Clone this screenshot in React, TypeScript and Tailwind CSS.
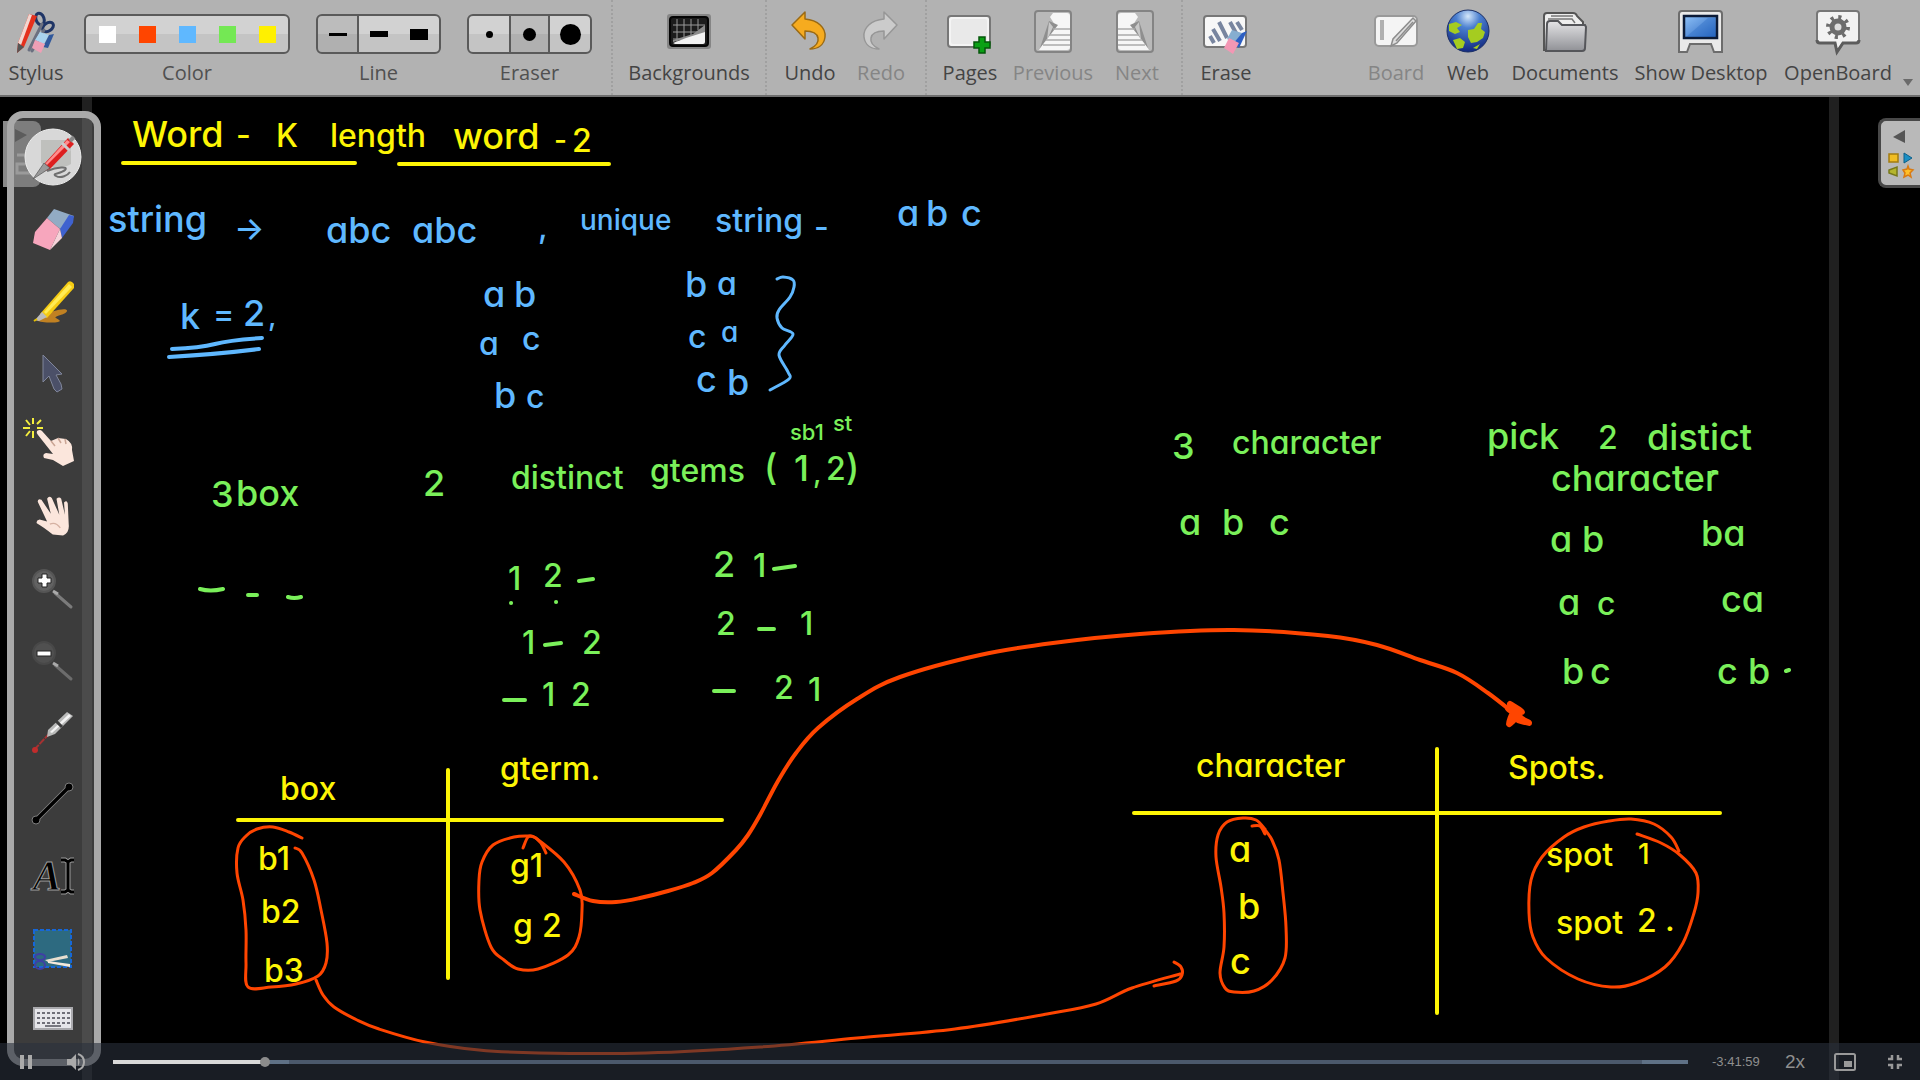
import React from "react";

type Point = [number, number];

const YELLOW = "#fdf505";
const BLUE = "#5fb8ff";
const GREEN = "#7af05a";
const RED = "#ff4500";

/** Turns a list of pen samples into a smooth curve. */
function smooth(points: Point[]): string {
  let d = `M${points[0][0]} ${points[0][1]}`;
  for (let i = 0; i < points.length - 1; i++) {
    const p0 = points[Math.max(0, i - 1)];
    const p1 = points[i];
    const p2 = points[i + 1];
    const p3 = points[Math.min(points.length - 1, i + 2)];
    const c1x = p1[0] + (p2[0] - p0[0]) / 6;
    const c1y = p1[1] + (p2[1] - p0[1]) / 6;
    const c2x = p2[0] - (p3[0] - p1[0]) / 6;
    const c2y = p2[1] - (p3[1] - p1[1]) / 6;
    d += `C${c1x} ${c1y} ${c2x} ${c2y} ${p2[0]} ${p2[1]}`;
  }
  return d;
}

/* ------------------------------------------------------------------ */
/* Board content                                                       */
/* ------------------------------------------------------------------ */

type Note = { x: number; y: number; s: 22 | 28 | 32 | 36; t: string };

const yellowNotes: Note[] = [
  { x: 132, y: 147, s: 36, t: "Word" },
  { x: 236, y: 146, s: 32, t: "-" },
  { x: 276, y: 147, s: 32, t: "K" },
  { x: 330, y: 147, s: 32, t: "length" },
  { x: 453, y: 149, s: 36, t: "word" },
  { x: 554, y: 150, s: 28, t: "-" },
  { x: 572, y: 152, s: 32, t: "2" },
  { x: 280, y: 800, s: 32, t: "box" },
  { x: 500, y: 780, s: 32, t: "gterm." },
  { x: 258, y: 870, s: 32, t: "b1" },
  { x: 261, y: 923, s: 32, t: "b2" },
  { x: 264, y: 982, s: 32, t: "b3" },
  { x: 510, y: 877, s: 32, t: "g1" },
  { x: 513, y: 937, s: 32, t: "g" },
  { x: 542, y: 937, s: 32, t: "2" },
  { x: 1196, y: 777, s: 32, t: "character" },
  { x: 1508, y: 779, s: 32, t: "Spots." },
  { x: 1229, y: 862, s: 36, t: "a" },
  { x: 1238, y: 919, s: 36, t: "b" },
  { x: 1230, y: 974, s: 36, t: "c" },
  { x: 1546, y: 866, s: 32, t: "spot" },
  { x: 1638, y: 864, s: 28, t: "1" },
  { x: 1556, y: 934, s: 32, t: "spot" },
  { x: 1637, y: 932, s: 32, t: "2" },
  { x: 1665, y: 931, s: 32, t: "." },
];

const blueNotes: Note[] = [
  { x: 108, y: 232, s: 36, t: "string" },
  { x: 234, y: 240, s: 32, t: "→" },
  { x: 326, y: 243, s: 36, t: "abc" },
  { x: 412, y: 243, s: 36, t: "abc" },
  { x: 538, y: 238, s: 32, t: "," },
  { x: 580, y: 230, s: 28, t: "unique" },
  { x: 715, y: 232, s: 32, t: "string" },
  { x: 814, y: 238, s: 32, t: "-" },
  { x: 897, y: 226, s: 36, t: "a" },
  { x: 926, y: 226, s: 36, t: "b" },
  { x: 961, y: 226, s: 36, t: "c" },
  { x: 180, y: 329, s: 36, t: "k" },
  { x: 213, y: 325, s: 32, t: "=" },
  { x: 243, y: 326, s: 36, t: "2" },
  { x: 268, y: 326, s: 28, t: "," },
  { x: 483, y: 307, s: 36, t: "a" },
  { x: 514, y: 307, s: 36, t: "b" },
  { x: 479, y: 355, s: 32, t: "a" },
  { x: 522, y: 350, s: 32, t: "c" },
  { x: 494, y: 408, s: 36, t: "b" },
  { x: 526, y: 408, s: 32, t: "c" },
  { x: 685, y: 297, s: 36, t: "b" },
  { x: 717, y: 295, s: 32, t: "a" },
  { x: 688, y: 348, s: 32, t: "c" },
  { x: 721, y: 342, s: 28, t: "a" },
  { x: 696, y: 392, s: 36, t: "c" },
  { x: 727, y: 395, s: 36, t: "b" },
];

const greenNotes: Note[] = [
  { x: 211, y: 507, s: 36, t: "3" },
  { x: 236, y: 506, s: 36, t: "box" },
  { x: 423, y: 496, s: 36, t: "2" },
  { x: 511, y: 489, s: 32, t: "distinct" },
  { x: 650, y: 482, s: 32, t: "gtems" },
  { x: 764, y: 480, s: 36, t: "(" },
  { x: 794, y: 481, s: 36, t: "1" },
  { x: 813, y: 483, s: 28, t: "," },
  { x: 826, y: 480, s: 32, t: "2" },
  { x: 846, y: 480, s: 36, t: ")" },
  { x: 790, y: 440, s: 22, t: "sb1" },
  { x: 833, y: 431, s: 22, t: "st" },
  { x: 508, y: 590, s: 32, t: "1" },
  { x: 543, y: 587, s: 32, t: "2" },
  { x: 713, y: 577, s: 36, t: "2" },
  { x: 753, y: 577, s: 32, t: "1" },
  { x: 522, y: 654, s: 32, t: "1" },
  { x: 582, y: 654, s: 32, t: "2" },
  { x: 716, y: 635, s: 32, t: "2" },
  { x: 800, y: 635, s: 32, t: "1" },
  { x: 542, y: 706, s: 32, t: "1" },
  { x: 571, y: 706, s: 32, t: "2" },
  { x: 774, y: 699, s: 32, t: "2" },
  { x: 808, y: 701, s: 32, t: "1" },
  { x: 1172, y: 459, s: 36, t: "3" },
  { x: 1232, y: 454, s: 32, t: "character" },
  { x: 1179, y: 535, s: 36, t: "a" },
  { x: 1222, y: 535, s: 36, t: "b" },
  { x: 1269, y: 535, s: 36, t: "c" },
  { x: 1487, y: 449, s: 36, t: "pick" },
  { x: 1598, y: 449, s: 32, t: "2" },
  { x: 1647, y: 450, s: 36, t: "distict" },
  { x: 1551, y: 491, s: 36, t: "character" },
  { x: 1550, y: 552, s: 36, t: "a" },
  { x: 1582, y: 552, s: 36, t: "b" },
  { x: 1701, y: 546, s: 36, t: "ba" },
  { x: 1558, y: 615, s: 36, t: "a" },
  { x: 1597, y: 615, s: 32, t: "c" },
  { x: 1721, y: 612, s: 36, t: "ca" },
  { x: 1562, y: 684, s: 36, t: "b" },
  { x: 1590, y: 684, s: 36, t: "c" },
  { x: 1717, y: 684, s: 36, t: "c" },
  { x: 1748, y: 684, s: 36, t: "b" },
];

const noteSize = { 22: "text-[22px]", 28: "text-[28px]", 32: "text-[32px]", 36: "text-[36px]" };

function Notes({ notes, color }: { notes: Note[]; color: string }) {
  return (
    <g fill={color}>
      {notes.map((n, i) => (
        <text key={i} x={n.x} y={n.y} className={noteSize[n.s]}>
          {n.t}
        </text>
      ))}
    </g>
  );
}

const brace: Point[] = [[777, 279], [783, 277], [793, 280], [794, 287], [790, 297], [779, 310], [777, 318], [782, 328], [793, 334], [785, 345], [779, 355], [788, 372], [789, 379], [770, 390]];

const redStrokes: Point[][] = [
  [[302, 838], [289, 832], [273, 827], [257, 829], [246, 836], [238, 848], [237, 873], [243, 900], [246, 930], [246, 963], [248, 987], [271, 987], [296, 984], [318, 976], [326, 963], [327, 943], [321, 910], [314, 880], [302, 853], [295, 848]],
  [[523, 848], [528, 837], [534, 837], [541, 843], [546, 853]],
  [[536, 838], [530, 836], [514, 837], [493, 845], [482, 862], [479, 880], [480, 910], [491, 947], [504, 960], [518, 969], [538, 969], [568, 955], [579, 937], [582, 910], [580, 890], [564, 862], [536, 838]],
  [[574, 894], [593, 901], [616, 902], [640, 898], [668, 891], [693, 883], [712, 873], [736, 850], [748, 835], [760, 815], [778, 781], [796, 753], [818, 728], [857, 699], [900, 677], [980, 655], [1053, 643], [1140, 634], [1234, 630], [1328, 636], [1377, 645], [1420, 660], [1457, 673], [1488, 693], [1516, 715]],
  [[1510, 704], [1522, 712], [1508, 708], [1516, 716], [1509, 724], [1514, 712], [1522, 719], [1529, 723], [1518, 720]],
  [[316, 980], [323, 995], [334, 1007], [357, 1020], [379, 1029], [425, 1042], [479, 1050], [539, 1053], [646, 1053], [760, 1047], [857, 1038], [955, 1029], [1047, 1014], [1096, 1004], [1132, 988], [1180, 974]],
  [[1174, 962], [1181, 967], [1182, 975], [1176, 981], [1154, 986]],
  [[1252, 826], [1260, 826], [1265, 834]],
  [[1265, 829], [1256, 820], [1243, 818], [1227, 822], [1218, 835], [1216, 857], [1221, 887], [1224, 913], [1224, 947], [1220, 973], [1225, 988], [1234, 992], [1254, 991], [1272, 980], [1285, 958], [1286, 927], [1283, 893], [1279, 860], [1272, 840], [1263, 827]],
  [[1679, 851], [1671, 837], [1654, 824], [1631, 819], [1609, 821], [1584, 827], [1564, 837], [1542, 857], [1531, 880], [1529, 913], [1533, 937], [1546, 958], [1578, 979], [1611, 987], [1636, 983], [1665, 967], [1683, 943], [1694, 913], [1698, 893], [1696, 873], [1680, 855], [1661, 843], [1637, 834]],
];

function Ink() {
  return (
    <svg
      viewBox="0 97 1920 983"
      preserveAspectRatio="xMinYMin meet"
      role="img"
      aria-label="Whiteboard notes"
      className="absolute inset-0 h-full w-full font-['Inter','Noto_Sans',sans-serif] font-medium [font-feature-settings:'cv11']"
    >
      <Notes notes={yellowNotes} color={YELLOW} />
      <Notes notes={blueNotes} color={BLUE} />
      <Notes notes={greenNotes} color={GREEN} />
      <g fill="none" strokeLinecap="round" strokeLinejoin="round" strokeWidth="4">
        <g stroke={YELLOW}>
          <path d="M123 163H355M399 164H609" />
          <path d="M238 820H722M448 770V978" />
          <path d="M1134 813H1720M1437 749V1013" />
        </g>
        <g stroke={BLUE}>
          <path d="M172 349Q200 348 215 344T262 338M169 357Q220 354 259 349" />
          <path d={smooth(brace)} strokeWidth="3" />
        </g>
        <g stroke={GREEN}>
          <path d="M200 589q10 3 23 0M248 595h9M288 597q6 2 13 0" />
          <path d="M579 581l14-2M774 569l21-3M545 645l16-2M759 629h15M504 700h21M714 691h20" />
          <path d="M511 603h.1M556 602h.1M1786 671l3-1M1713 472h3" />
        </g>
        <g stroke={RED}>
          {redStrokes.map((s, i) => (
            <path key={i} d={smooth(s)} strokeWidth={i === 4 ? 6 : i === 3 ? 4 : 3} />
          ))}
        </g>
      </g>
    </svg>
  );
}

/* ------------------------------------------------------------------ */
/* Toolbar icons (44 x 44)                                             */
/* ------------------------------------------------------------------ */

function Icon({ children }: { children: React.ReactNode }) {
  return (
    <svg viewBox="0 0 44 44" className="h-11 w-11 flex-none overflow-visible" aria-hidden="true">
      {children}
    </svg>
  );
}

const StylusIcon = () => (
  <Icon>
    <g fill="none" stroke="#1f3566" strokeWidth="3">
      <ellipse cx="26" cy="9" rx="4" ry="6" transform="rotate(-20 26 9)" />
      <ellipse cx="34" cy="17" rx="6" ry="4" transform="rotate(-35 34 17)" />
    </g>
    <path d="M28 14L15 40M30 20L18 41" stroke="#6b7080" strokeWidth="3" strokeLinecap="round" />
    <path d="M15 4l8 2L10 37l-7 6 1-10z" fill="#e5301c" />
    <path d="M15 4l3 1L7 35l-3-2z" fill="#f3d6d0" />
    <path d="M4 33l6 4-7 6z" fill="#555" />
    <path d="M26 22l9 3-5 9-9-4z" fill="#a9d3ee" />
    <path d="M35 25l5-1-6 14-5-1z" fill="#30589c" />
    <path d="M21 30l10 4-4 9-9-5z" fill="#ef9fb6" />
  </Icon>
);

const BackgroundsIcon = () => (
  <Icon>
    <rect x="0" y="4" width="44" height="35" rx="3" fill="#858585" />
    <rect x="3" y="7" width="38" height="29" rx="3" fill="#1c1c1c" stroke="#050505" strokeWidth="2" />
    <path d="M10 9v25M17 9v20M24 9v16M31 9v11M6 15h32M6 22h28M6 29h16" stroke="#999" strokeWidth="1" />
    <path d="M6 30l20-6 12-9v9L6 32z" fill="#8b8b8b" />
    <path d="M6 33l13-5 19-6v10q0 2-2 2H8z" fill="#f2f2f2" />
  </Icon>
);

const UndoIcon = ({ light }: { light?: boolean }) => (
  <Icon>
    <g transform={light ? "matrix(-1 0 0 1 42 0)" : undefined}>
      <path
        d="M4 15L17 2v7c13 1 21 9 20 18-1 8-7 12-15 12 6-3 9-6 8-11-1-5-6-7-13-7v8z"
        fill={light ? "#cbcbcb" : "#f6ab1f"}
        stroke={light ? "#979797" : "#9a6a14"}
        strokeWidth="1.5"
        strokeLinejoin="round"
      />
    </g>
  </Icon>
);

const PagesIcon = () => (
  <Icon>
    <rect x="0" y="6" width="42" height="31" rx="3" fill="#f4f4f4" stroke="#777" strokeWidth="2" />
    <rect x="3" y="9" width="36" height="25" rx="2" fill="#e9e9e9" />
    <path d="M31 27h6v5h5v6h-5v5h-6v-5h-5v-6h5z" fill="#0aa014" stroke="#04570a" strokeWidth="1.5" />
  </Icon>
);

const StepIcon = ({ next }: { next?: boolean }) => (
  <Icon>
    <g transform={next ? "matrix(-1 0 0 1 42 0)" : undefined}>
      <rect x="4" y="1" width="36" height="41" rx="3" fill="#b9b9b9" stroke="#848484" strokeWidth="2" />
      <path d="M22 3h14q3 0 3 3v31q0 3-3 3H8l16-25-5-8z" fill="#f6f6f6" />
      <path d="M18 11l9 4L9 38z" fill="#8f8f8f" />
      <path d="M18 12l4 5-6 13z" fill="#c9c9c9" />
      <path d="M22 19h17M19 25h20M15 30h24M12 35h27" stroke="#aaa" strokeWidth="1.5" />
    </g>
  </Icon>
);

const EraseIcon = () => (
  <Icon>
    <rect x="0" y="6" width="42" height="31" rx="3" fill="#f7f7f7" stroke="#767676" strokeWidth="2" />
    <path d="M6 26l4 7M9 19l7 12M15 12l8 16M26 12l6 11M33 12l5 8" stroke="#78859f" strokeWidth="4" />
    <path d="M28 20l10 3-6 11-9-5z" fill="#86aed0" />
    <path d="M38 23l5-2-8 17-6-4z" fill="#2d5fc2" />
    <path d="M25 28l10 5-6 11-9-6z" fill="#f397b4" />
  </Icon>
);

const BoardIcon = () => (
  <Icon>
    <rect x="1" y="6" width="42" height="30" rx="4" fill="#f4f4f4" stroke="#999" strokeWidth="2" />
    <path d="M8 10v20" stroke="#b0b0b0" strokeWidth="4" />
    <path d="M39 8l3 3-19 22-6 3 2-7z" fill="#ddd" stroke="#8c8c8c" strokeWidth="1.5" />
    <path d="M39 12L22 31" stroke="#8c8c8c" strokeWidth="1.5" />
  </Icon>
);

const WebIcon = () => (
  <Icon>
    <defs>
      <radialGradient id="globe" cx="50%" cy="15%" r="80%">
        <stop offset="0" stopColor="#d5e8fa" />
        <stop offset=".35" stopColor="#4a7fd0" />
        <stop offset="1" stopColor="#162f86" />
      </radialGradient>
    </defs>
    <circle cx="22" cy="21" r="21" fill="url(#globe)" stroke="#1b2f66" />
    <path d="M3 14l7-2 6 3-5 3 3 4-5 2-6-3zM22 20l6-1 4-6h4l-1 6 4 3-2 6-6 4-6 1-3-6zM7 30l7-2 5 4-2 6-6 1zM27 38l7-4-3 5z" fill="#a5cc20" />
  </Icon>
);

const DocumentsIcon = () => (
  <Icon>
    <defs>
      <linearGradient id="folder" x1="0" y1="0" x2="0" y2="1">
        <stop offset="0" stopColor="#e4e4e6" />
        <stop offset="1" stopColor="#909196" />
      </linearGradient>
    </defs>
    <path d="M1 40V6q0-3 3-3h26q3 0 4 3l6 6v28z" fill="#eee" stroke="#555" strokeWidth="2" />
    <path d="M5 9h24l3 4M8 6h22" fill="none" stroke="#777" strokeWidth="1.5" />
    <path d="M3 41l1-27q0-3 3-3h8l4 4h23l1 2-1 21q0 3-3 3z" fill="url(#folder)" stroke="#55565a" strokeWidth="2" />
  </Icon>
);

const DesktopIcon = () => (
  <Icon>
    <defs>
      <linearGradient id="screen" x1="0" y1="0" x2="1" y2="1">
        <stop offset="0" stopColor="#8fc1f7" />
        <stop offset="1" stopColor="#2462bd" />
      </linearGradient>
    </defs>
    <path d="M3 1h37q3 0 3 3v38h-8l-3-8H11l-3 8H0V4q0-3 3-3z" fill="#e9e9e9" stroke="#6c6c6c" strokeWidth="2" />
    <rect x="5" y="6" width="33" height="22" fill="url(#screen)" stroke="#0b1a36" strokeWidth="2.5" />
    <path d="M7 27L29 8h7v19z" fill="#1f60bd" opacity=".3" />
  </Icon>
);

const OpenBoardIcon = () => (
  <Icon>
    <path d="M4 1h36q3 0 3 3v26q0 3-3 3H27l-6 9-2-9H4q-3 0-3-3V4q0-3 3-3z" fill="#f2f2f2" stroke="#777" strokeWidth="2" />
    <path d="M1 30q0 3 3 3h15l2 9 6-9h13q3 0 3-3" fill="none" stroke="#5c5c5c" strokeWidth="3" />
    <circle cx="22" cy="17" r="10" fill="none" stroke="#6c6c6c" strokeWidth="4" strokeDasharray="3.1 4.75" />
    <circle cx="22" cy="17" r="6" fill="#ddd" stroke="#6c6c6c" strokeWidth="5" />
  </Icon>
);

/* ------------------------------------------------------------------ */
/* Palette icons (40 x 40)                                             */
/* ------------------------------------------------------------------ */

const paletteTools: { name: string; art: React.ReactNode }[] = [
  {
    name: "Pen",
    art: (
      <>
        <circle cx="20" cy="20" r="28" fill="#d8d8d8" stroke="#ededed" />
        <path d="M8 3h26l4 6v18q-14 8-30-1z" fill="#b9bab6" opacity=".8" />
        <path d="M14 34c10-4 22-5 18-1s-14 3-9 6 12-1 14-4" fill="none" stroke="#6f6f6f" strokeWidth="2" />
        <path d="M35 1l6 6-24 25-8 3 3-9z" fill="#dd1f1f" />
        <path d="M34 3l3 2-23 23-2-1z" fill="#ff8c8c" />
        <path d="M11 26l6 5-17 11z" fill="#9a9a9a" stroke="#555" strokeWidth=".7" />
        <path d="M29 6l8 8" stroke="#ccc" strokeWidth="3" />
        <path d="M41 0l-4 4" stroke="#888" strokeWidth="4" />
      </>
    ),
  },
  {
    name: "Eraser",
    art: (
      <>
        <path d="M14 9L21 0l20 7-5 10-9 3z" fill="#92abc4" />
        <path d="M36 6l5 1-1 7-11 15-2-9z" fill="#3f62cf" />
        <path d="M14 9l13 11-10 21L0 34l2-11z" fill="#f7a6bd" />
        <path d="M27 20l2 9-12 12z" fill="#f6d3da" />
      </>
    ),
  },
  {
    name: "Highlighter",
    art: (
      <>
        <path d="M9 36c9-7 26-10 25-6s-14 5-11 7 6 3 2 4-17 1-22-2z" fill="#c18122" />
        <path d="M35 1q3-2 6 2v4L14 37l-7-4z" fill="#f5cb13" />
        <path d="M36 3l3 3-26 27-2-2z" fill="#ffeb55" />
        <path d="M9 31l5 5-8 4-4-1z" fill="#bcbcbc" />
        <path d="M4 38l-3 2" stroke="#e5c000" strokeWidth="2" />
      </>
    ),
  },
  {
    name: "Select",
    art: <path d="M10 2v27l6-6 5 13 3 3 5-3-1-5-5-9 6-1z" fill="#4b5068" stroke="#80869b" strokeWidth="1" />,
  },
  {
    name: "Interact",
    art: (
      <>
        <path d="M0-7v6M0 6v7M-10 3h7M4 3h6M-7-5l4 5M8-5L4-1M-7 11l4-5" stroke="#f4ee3e" strokeWidth="2" fill="none" />
        <path d="M4 6q3-2 5 0l9 10 7-3 8 1q7 4 6 11l2 11-11 5-10-6-9-2q-2-4 2-5l7 1L5 10q-2-2-1-4z" fill="#fbe6dc" />
        <path d="M18 16l4 5M25 13l3 5M32 14l1 5" stroke="#caa595" strokeWidth="1.5" />
      </>
    ),
  },
  {
    name: "Scroll page",
    art: (
      <g transform="translate(0 -1) scale(.94)">
        <path d="M15 27L5 6q0-4 4-2l10 15L15 3q2-4 5-1l8 18-3-17q3-3 5 0l4 17-1-13q3-3 4 1l1 22q1 9-6 12l-11-1Q11 33 4 29q-1-3 3-4z" fill="#fbe6dc" />
        <path d="M18 30q6-3 11 4" stroke="#d5b1a2" strokeWidth="1.5" fill="none" />
      </g>
    ),
  },
  {
    name: "Zoom in",
    art: (
      <>
        <circle cx="11" cy="12" r="11" fill="#626262" stroke="#555" strokeWidth="2" />
        <path d="M22 24l16 14" stroke="#7b7b7b" strokeWidth="3" strokeLinecap="round" />
        <path d="M20 22l5 3" stroke="#aaa" strokeWidth="3" />
        <path d="M9 5h5v4h4v5h-4v4H9v-4H5V9h4z" fill="#fff" stroke="#222" strokeWidth="1" />
      </>
    ),
  },
  {
    name: "Zoom out",
    art: (
      <>
        <circle cx="11" cy="12" r="11" fill="#505050" stroke="#484848" strokeWidth="2" />
        <path d="M22 24l16 14" stroke="#6c6c6c" strokeWidth="3" strokeLinecap="round" />
        <path d="M20 22l5 3" stroke="#aaa" strokeWidth="3" />
        <rect x="4" y="10" width="14" height="5" fill="#fff" stroke="#222" />
      </>
    ),
  },
  {
    name: "Laser pointer",
    art: (
      <>
        <path d="M1 37L16 21" stroke="#a53232" strokeWidth="2" strokeDasharray="7 1" />
        <circle cx="2" cy="37" r="3" fill="#c12c2c" />
        <path d="M34-1l6 4-18 18-8 3 1-7z" fill="#b9bab9" />
        <path d="M36 1l2 2-19 17-2-1z" fill="#f4f4f4" />
        <path d="M23 8l6 6" stroke="#3d3d3d" strokeWidth="3" />
      </>
    ),
  },
  {
    name: "Draw line",
    art: (
      <>
        <path d="M3 35L36 2" stroke="#8c8c8c" strokeWidth="5" />
        <circle cx="3" cy="35" r="4" stroke="#7c7c7c" />
        <circle cx="36" cy="2" r="4" stroke="#7c7c7c" />
        <path d="M3 35L36 2" stroke="#000" strokeWidth="3.5" />
      </>
    ),
  },
  {
    name: "Write text",
    art: (
      <>
        <text x="0" y="33" stroke="#9c9c9c" strokeWidth="1" className="font-['Liberation_Serif',serif] text-[42px] font-bold italic">
          A
        </text>
        <g fill="none">
          <path d="M28 3h4l3 2 3-2h3M35 5v28M28 35h4l3-2 3 2h3" stroke="#9c9c9c" strokeWidth="5" />
          <path d="M28 3h4l3 2 3-2h3M35 5v28M28 35h4l3-2 3 2h3" stroke="#000" strokeWidth="3" />
        </g>
      </>
    ),
  },
  {
    name: "Capture part of the screen",
    art: (
      <>
        <rect x="1" y="1" width="37" height="37" fill="#2d6a80" stroke="#1667d8" strokeWidth="2" strokeDasharray="4 2" />
        <path d="M12 31l22-5 1 3-20 4z" fill="#e8dfcf" />
        <path d="M15 32l22 3v3l-22-4z" fill="#f4e9dc" />
        <g fill="none" stroke="#3f3fa5" strokeWidth="2">
          <ellipse cx="7" cy="28" rx="5" ry="3" />
          <ellipse cx="7" cy="36" rx="5" ry="4" />
        </g>
      </>
    ),
  },
  {
    name: "Virtual keyboard",
    art: (
      <>
        <rect x="1" y="7" width="38" height="21" fill="#e6e6ea" stroke="#a9a9ad" strokeWidth="2" />
        <path d="M4 12h33M4 17h33M4 22h33" stroke="#6f6f78" strokeWidth="2" strokeDasharray="3 2" />
        <path d="M12 25h16" stroke="#77777f" strokeWidth="2" />
      </>
    ),
  },
];

/* ------------------------------------------------------------------ */
/* Chrome                                                              */
/* ------------------------------------------------------------------ */

function ToolButton({ label, width, disabled, children }: { label: string; width: string; disabled?: boolean; children: React.ReactNode }) {
  return (
    <button
      type="button"
      disabled={disabled}
      className={`flex flex-none flex-col items-center gap-[5px] whitespace-nowrap ${width} ${disabled ? "text-[#858585]" : "text-[#444]"}`}
    >
      {children}
      <span>{label}</span>
    </button>
  );
}

function Group({ label, children }: { label: string; children: React.ReactNode }) {
  return (
    <div role="group" aria-label={label} className="flex flex-none flex-col items-center gap-[5px] text-[#505050]">
      <div className="flex h-11 flex-none items-center pt-1">
        <div className="flex h-10 overflow-hidden rounded-md border-2 border-[#5a5a5a] bg-linear-to-b from-[#d2d2d2] from-50% to-[#c4c4c4] to-50%">
          {children}
        </div>
      </div>
      <span>{label}</span>
    </div>
  );
}

const Separator = () => <div className="mx-2 h-full border-l-2 border-dotted border-[#a0a0a0]" />;

const colors = [
  { name: "White", cls: "bg-white" },
  { name: "Red", cls: "bg-[#ff4500]" },
  { name: "Blue", cls: "bg-[#5fb8ff]" },
  { name: "Green", cls: "bg-[#74e854]" },
  { name: "Yellow", cls: "bg-[#fff000]" },
];

function Toolbar() {
  return (
    <header className="flex h-[97px] flex-none items-stretch overflow-hidden border-b-2 border-[#6e6e6e] bg-[#b2b2b2] font-['Open_Sans','Noto_Sans',sans-serif] text-[20px] leading-7 text-[#444]">
      <div className="flex flex-none items-start pt-[10px]">
        <ToolButton label="Stylus" width="w-[72px]">
          <StylusIcon />
        </ToolButton>
        <div className="ml-3 flex gap-[26px]">
          <Group label="Color">
            <div className="flex px-px">
              {colors.map((c) => (
                <button key={c.name} type="button" aria-label={c.name} className="flex w-10 items-center justify-center">
                  <span className={`h-[17px] w-[17px] ${c.cls}`} />
                </button>
              ))}
            </div>
          </Group>
          <Group label="Line">
            <button type="button" aria-label="Fine line" aria-pressed="true" className="flex w-[41px] items-center justify-center border-r-2 border-[#5a5a5a] bg-black/10">
              <span className="h-[3px] w-[18px] bg-black" />
            </button>
            <button type="button" aria-label="Medium line" className="flex w-10 items-center justify-center">
              <span className="h-[6px] w-[18px] bg-black" />
            </button>
            <button type="button" aria-label="Strong line" className="flex w-10 items-center justify-center">
              <span className="h-[11px] w-[18px] bg-black" />
            </button>
          </Group>
          <Group label="Eraser">
            <button type="button" aria-label="Small eraser" className="flex w-10 items-center justify-center">
              <span className="h-[7px] w-[7px] rounded-full bg-black" />
            </button>
            <button type="button" aria-label="Medium eraser" aria-pressed="true" className="flex w-[41px] items-center justify-center border-x-2 border-[#5a5a5a] bg-black/10">
              <span className="h-[13px] w-[13px] rounded-full bg-black" />
            </button>
            <button type="button" aria-label="Large eraser" className="flex w-10 items-center justify-center">
              <span className="h-[21px] w-[21px] rounded-full bg-black" />
            </button>
          </Group>
        </div>
      </div>
      <div className="ml-[11px]">
        <Separator />
      </div>
      <div className="flex items-start pt-[10px]">
        <ToolButton label="Backgrounds" width="w-[136px]">
          <BackgroundsIcon />
        </ToolButton>
      </div>
      <Separator />
      <div className="flex items-start pt-[10px]">
        <ToolButton label="Undo" width="w-[70px]">
          <UndoIcon />
        </ToolButton>
        <ToolButton label="Redo" width="w-[72px]" disabled>
          <UndoIcon light />
        </ToolButton>
      </div>
      <Separator />
      <div className="flex items-start pt-[10px]">
        <ToolButton label="Pages" width="w-[70px]">
          <PagesIcon />
        </ToolButton>
        <ToolButton label="Previous" width="w-24" disabled>
          <StepIcon />
        </ToolButton>
        <ToolButton label="Next" width="w-[72px]" disabled>
          <StepIcon next />
        </ToolButton>
      </div>
      <Separator />
      <div className="flex items-start pt-[10px]">
        <ToolButton label="Erase" width="w-[70px]">
          <EraseIcon />
        </ToolButton>
      </div>
      <div className="ml-auto flex items-start pt-[10px]">
        <ToolButton label="Board" width="w-[72px]" disabled>
          <BoardIcon />
        </ToolButton>
        <ToolButton label="Web" width="w-[72px]">
          <WebIcon />
        </ToolButton>
        <ToolButton label="Documents" width="w-[122px]">
          <DocumentsIcon />
        </ToolButton>
        <ToolButton label="Show Desktop" width="w-[150px]">
          <DesktopIcon />
        </ToolButton>
        <ToolButton label="OpenBoard" width="w-[124px]">
          <OpenBoardIcon />
        </ToolButton>
        <button type="button" aria-label="OpenBoard menu" className="flex w-5 items-end self-stretch pb-[9px] pl-[3px]">
          <svg viewBox="0 0 10 7" className="h-[7px] w-[10px]" aria-hidden="true">
            <path d="M0 0h10L5 7z" fill="#6a6a6a" />
          </svg>
        </button>
      </div>
    </header>
  );
}

function Palette() {
  return (
    <nav
      aria-label="Stylus palette"
      className="absolute bottom-[14px] left-[7px] top-[14px] flex w-[94px] flex-col items-center overflow-hidden rounded-2xl border-[7px] border-[#a9a9a9] bg-[rgba(113,113,113,0.53)] pt-[3px]"
    >
      {paletteTools.map((tool) => (
        <button key={tool.name} type="button" aria-label={tool.name} className="flex h-[72px] w-full flex-none items-center justify-center pr-[2px]">
          <svg viewBox="0 0 40 40" className="h-10 w-10 overflow-visible" aria-hidden="true">
            {tool.art}
          </svg>
        </button>
      ))}
    </nav>
  );
}

function PlayerBar() {
  return (
    <footer className="absolute inset-x-0 bottom-0 flex h-[37px] items-center bg-[rgba(41,49,60,0.6)] pr-[18px] font-['Liberation_Sans',Arial,sans-serif] text-[#8f8f8f]">
      <button type="button" aria-label="Pause" className="flex w-[51px] flex-none justify-center">
        <svg viewBox="0 0 12 14" className="h-[14px] w-3" aria-hidden="true">
          <path d="M0 0h4v14H0zM8 0h4v14H8z" fill="#aaa" />
        </svg>
      </button>
      <button type="button" aria-label="Volume" className="flex w-[49px] flex-none justify-center">
        <svg viewBox="0 0 18 18" className="h-[18px] w-[18px]" aria-hidden="true">
          <path d="M0 6h4l5-5v16l-5-5H0zM11 5q3 4 0 8z" fill="#aaa" />
          <path d="M11 1q6 2 6 8t-6 8" fill="none" stroke="#aaa" strokeWidth="2" />
        </svg>
      </button>
      <input
        type="range"
        aria-label="Seek"
        min={0}
        max={1000}
        defaultValue={94}
        className="ml-[13px] h-1 min-w-0 flex-1 appearance-none bg-[linear-gradient(to_right,#d8d8d8_9.7%,#5f7186_9.7%,#5f7186_11.2%,#4b596c_11.2%,#4b596c_97.1%,#5f7186_97.1%)] [&::-webkit-slider-thumb]:h-[10px] [&::-webkit-slider-thumb]:w-[10px] [&::-webkit-slider-thumb]:appearance-none [&::-webkit-slider-thumb]:rounded-full [&::-webkit-slider-thumb]:bg-[#8c8c8c]"
      />
      <span className="ml-6 w-[48px] flex-none text-[13px]">-3:41:59</span>
      <button type="button" aria-label="Playback speed" className="ml-6 w-[22px] flex-none text-[19px] leading-6">
        2x
      </button>
      <button type="button" aria-label="Picture in picture" className="ml-[28px] flex-none">
        <svg viewBox="0 0 22 18" className="h-[18px] w-[22px]" aria-hidden="true">
          <rect x="1" y="1" width="20" height="16" rx="1.5" fill="none" stroke="#999" strokeWidth="2" />
          <rect x="10" y="8" width="8" height="6" fill="#999" />
        </svg>
      </button>
      <button type="button" aria-label="Exit full screen" className="ml-8 flex-none">
        <svg viewBox="0 0 14 14" className="h-[14px] w-[14px]" aria-hidden="true">
          <path d="M0 4h4V0M10 0v4h4M0 10h4v4M14 10h-4v4" fill="none" stroke="#999" strokeWidth="2.5" />
        </svg>
      </button>
    </footer>
  );
}

export default function App() {
  return (
    <div className="flex h-screen min-h-[600px] flex-col bg-black">
      <Toolbar />
      <main className="relative min-h-0 flex-1 overflow-hidden bg-black">
        <div className="absolute inset-y-0 left-[82px] w-[10px] bg-[#202020]" />
        <div className="absolute inset-y-0 right-[81px] w-[10px] bg-[#202020]" />
        <Ink />
        <button type="button" aria-label="Open page navigator" className="absolute left-[3px] top-6 h-[66px] w-[38px] rounded-r-lg bg-[#8a8a8a]">
          <svg viewBox="0 0 38 66" className="h-full w-full" aria-hidden="true">
            <path d="M12 8l12 6-12 7z" fill="#444" />
            <path d="M14 34h14M14 43h16v9H14z" stroke="#c9c9c9" strokeWidth="3" fill="none" />
          </svg>
        </button>
        <button
          type="button"
          aria-label="Open library"
          className="absolute right-0 top-[21px] h-[70px] w-[42px] rounded-l-lg border-[3px] border-r-0 border-[#484848] bg-[#b9b9b9]"
        >
          <svg viewBox="0 0 39 64" className="h-full w-full" aria-hidden="true">
            <path d="M24 9v13l-12-6z" fill="#555" />
            <path d="M8 33h9v8H8z" fill="#f0bd24" stroke="#a27c10" strokeWidth="1.5" />
            <path d="M23 32l8 5-8 5z" fill="#1b8fc4" stroke="#0d5f89" />
            <path d="M16 46v9l-8-3v-3z" fill="#b5b52c" stroke="#77781b" strokeWidth="1.5" />
            <path d="M27 45l1 3 4 1-3 3 1 4-3-2-4 2 1-4-2-3 4-1z" fill="#ffc02a" stroke="#d97a12" strokeWidth="1.5" />
          </svg>
        </button>
        <Palette />
        <PlayerBar />
      </main>
    </div>
  );
}
